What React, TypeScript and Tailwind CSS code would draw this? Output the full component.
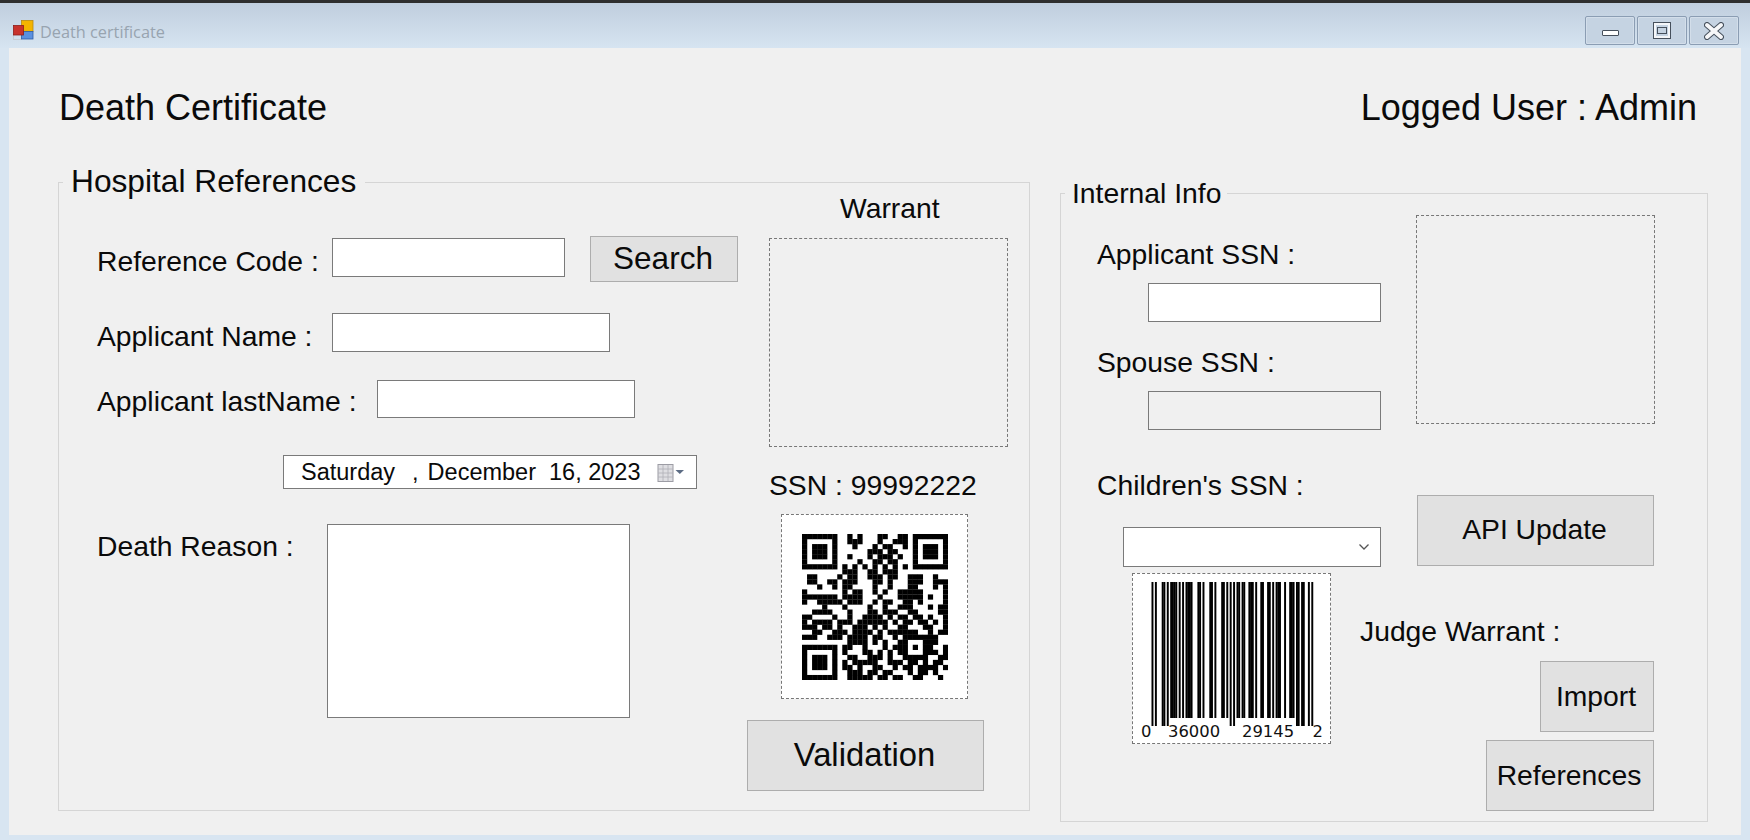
import React from "react";

const FONT = "font-['Liberation_Sans',Arial,sans-serif]";

const top = (s: string) => "00000000" + s.replace(/ /g, "") + "00000000";
const mid = (a: string, b: string, c: string) => a + b + c;
const bot = (s: string) => "00000000" + s;

const qrData = [
  top("0101000110011"),
  top("0111000100111"),
  top("0010001011001"),
  top("0000011101100"),
  top("0100010111010"),
  top("0001001101100"),
  top("1010101010101"),
  top("1110011011100"),
  mid("01100001", "01100111011001", "1100100"),
  mid("01100110", "11100011010001", "1100111"),
  mid("00010010", "11000010010001", "1000101"),
  mid("10000000", "10110010100111", "1100001"),
  mid("11111110", "11110001000111", "1101001"),
  mid("10011111", "01110010110011", "0100001"),
  mid("00001000", "10000100100111", "0001011"),
  mid("00111100", "01000110111001", "1000011"),
  mid("11000010", "01001111010110", "1101001"),
  mid("10111101", "11011111101011", "0110101"),
  mid("11101101", "00111010100110", "0011001"),
  mid("00110011", "10111101011111", "1001011"),
  mid("11100111", "01111011001000", "0001100"),
  bot("011110101001100011100"),
  bot("110010001011101011001"),
  bot("100011010101100011101"),
  bot("011001110100111110011"),
  bot("101111100111011010110"),
  bot("110100110010110111101"),
  bot("011101101100010110100"),
  bot("011111011011001100010"),
];

function finder(r: number, c: number) {
  const ring = (x: number, y: number) => {
    const dx = c - x;
    const dy = r - y;
    if (dx < 0 || dy < 0 || dx > 6 || dy > 6) return -1;
    if (dx === 0 || dy === 0 || dx === 6 || dy === 6) return 1;
    if (dx === 1 || dy === 1 || dx === 5 || dy === 5) return 0;
    return 1;
  };
  return Math.max(ring(0, 0), ring(22, 0), ring(0, 22));
}

function qrCell(r: number, c: number) {
  const f = finder(r, c);
  if (f >= 0) return f === 1;
  if (r >= 20 && r <= 24 && c >= 20 && c <= 24) {
    if (r === 20 || r === 24 || c === 20 || c === 24) return true;
    return r === 22 && c === 22;
  }
  return qrData[r][c] === "1";
}

const L: Record<string, string> = {
  "0": "0001101", "1": "0011001", "2": "0010011", "3": "0111101", "4": "0100011",
  "5": "0110001", "6": "0101111", "7": "0111011", "8": "0110111", "9": "0001011",
};
const R = (d: string) => L[d].split("").map((c) => (c === "1" ? "0" : "1")).join("");
const upc = "101" + "036000".split("").map((d) => L[d]).join("") + "01010" + "291452".split("").map(R).join("") + "101";
const isLong = (i: number) => i < 10 || (i >= 45 && i < 50) || i >= 85;

function Barcode() {
  const m = 161.5 / 95;
  return (
    <svg width="197" height="169" viewBox="0 0 197 169" className="block">
      {upc.split("").map((b, i) =>
        b === "1" ? <rect key={i} x={18.5 + i * m} y={8} width={m + 0.25} height={isLong(i) ? 144 : 136} fill="#000" /> : null
      )}
      <g fontFamily="'DejaVu Sans',sans-serif" fontSize="16.4" fill="#111">
        <text x="8" y="162.5">0</text>
        <text x="35" y="162.5">36000</text>
        <text x="109" y="162.5">29145</text>
        <text x="179.5" y="162.5">2</text>
      </g>
    </svg>
  );
}

function Qr() {
  const s = 146 / 29;
  const cells: React.ReactNode[] = [];
  for (let r = 0; r < 29; r++) {
    for (let c = 0; c < 29; c++) {
      if (qrCell(r, c)) {
        cells.push(<rect key={r + "-" + c} x={c * s} y={r * s} width={s + 0.2} height={s + 0.2} fill="#000" />);
      }
    }
  }
  return (
    <svg width="146" height="146" viewBox="0 0 146 146" className="block">
      {cells}
    </svg>
  );
}

function Label({ children, className = "" }: { children: React.ReactNode; className?: string }) {
  return <div className={"text-[28.3px] leading-[36px] whitespace-pre text-[#0a0a0a] " + className}>{children}</div>;
}

function Field({ className = "" }: { className?: string }) {
  return <div className={"border border-[#7a7a7a] bg-white " + className} />;
}

function Btn({ children, className = "" }: { children: React.ReactNode; className?: string }) {
  return (
    <div className={"flex items-center justify-center border border-[#adadad] bg-[#e1e1e1] text-[#0a0a0a] " + className}>
      {children}
    </div>
  );
}

function WinBtn({ children }: { children: React.ReactNode }) {
  return (
    <div className="flex h-[29px] w-[50px] items-center justify-center rounded-[2px] border border-[#8b9db3] bg-[#c5d3e2] shadow-[inset_0_0_0_1px_#d3deea]">
      {children}
    </div>
  );
}

export default function App() {
  return (
    <div className={"flex h-[840px] w-[1750px] flex-col overflow-hidden bg-[#d8e5f1] " + FONT}>
      <div className="h-[3px] bg-[#2e2e2e]" />
      <div className="flex h-[45px] items-start bg-gradient-to-b from-[#c0cede] to-[#d6e4f1]">
        <svg width="22" height="22" viewBox="0 0 22 22" className="ml-[12px] mt-[16px]">
          <rect x="1.5" y="15" width="8" height="5.5" fill="none" stroke="#c4c4c8" strokeWidth="0.7" />
          <rect x="9.5" y="1.5" width="11.5" height="11" fill="#f4b400" stroke="#b98a10" strokeWidth="0.8" />
          <rect x="9.5" y="12.5" width="11.5" height="7.5" fill="#5a90e0" stroke="#2f5ea8" strokeWidth="0.8" />
          <rect x="1.5" y="6.5" width="10" height="9.5" fill="#c8322c" stroke="#8e1d1a" strokeWidth="0.8" />
        </svg>
        <div className="ml-[6px] mt-[16px] font-['Open_Sans',sans-serif] text-[16.3px] leading-[26px] text-[#98a4b0]">Death certificate</div>
        <div className="ml-auto mr-[11px] mt-[13px] flex gap-[2px]">
          <WinBtn>
            <div className="mt-[4px] h-[6px] w-[17px] rounded-[1px] border border-[#46505c] bg-white" />
          </WinBtn>
          <WinBtn>
            <div className="flex h-[15px] w-[16px] items-center justify-center border-[2px] border-[#f4f6f9] outline outline-1 outline-[#46505c]">
              <div className="h-[7px] w-[10px] border border-[#46505c] bg-[#c5d3e2]" />
            </div>
          </WinBtn>
          <WinBtn>
            <svg width="20" height="18" viewBox="0 0 20 18">
              <path d="M3 3 L17 15 M17 3 L3 15" stroke="#46505c" strokeWidth="6" strokeLinecap="round" />
              <path d="M3 3 L17 15 M17 3 L3 15" stroke="#f6f7f9" strokeWidth="4" strokeLinecap="round" />
            </svg>
          </WinBtn>
        </div>
      </div>

      <div className="mx-[9px] h-[787px] bg-[#f0f0f0]">
        <div className="flex justify-between pl-[50px] pr-[44px] pt-[40px] text-[36px] leading-[40px] text-[#0a0a0a]">
          <div>Death Certificate</div>
          <div>Logged User : Admin</div>
        </div>

        <div className="mt-[54px] flex items-start">
          {/* Hospital References */}
          <div className="relative ml-[49px] flex w-[972px] border border-[#d5d5d5] pb-[19px] pl-[38px]">
            <div className="absolute left-[4px] top-[-20px] bg-[#f0f0f0] pl-[8px] pr-[9px] text-[31.7px] leading-[36px] text-[#0a0a0a]">Hospital References</div>

            <div className="w-[650px] pt-[53px]">
              <div className="flex items-start">
                <Label className="mt-[7px] w-[235px]">Reference Code :</Label>
                <Field className="mt-[2px] h-[39px] w-[233px]" />
                <Btn className="ml-[25px] h-[46px] w-[148px] pr-[2px] text-[31.5px]">Search</Btn>
              </div>
              <div className="mt-[31px] flex items-start">
                <Label className="mt-[5px] w-[235px]">Applicant Name :</Label>
                <Field className="h-[39px] w-[278px]" />
              </div>
              <div className="mt-[26px] flex items-start">
                <Label className="mt-[3px] w-[280px]">Applicant lastName :</Label>
                <Field className="h-[38px] w-[258px]" />
              </div>
              <div className="ml-[186px] mt-[36px] flex h-[34px] w-[414px] items-center border border-[#7a7a7a] bg-white pl-[17px] pt-[1px] text-[23.5px] text-[#0a0a0a]">
                <span className="whitespace-pre">Saturday</span>
                <span className="ml-[17px] whitespace-pre">,</span>
                <span className="ml-[9px] whitespace-pre">December</span>
                <span className="ml-[13px] whitespace-pre">16, 2023</span>
                <svg width="30" height="20" viewBox="0 0 30 20" className="ml-[17px]">
                  <rect x="1" y="1.5" width="15" height="17" fill="#dedee2" stroke="#9c9ca4" />
                  <path d="M1 6H16M1 10H16M1 14H16M6 2V18M11 2V18" stroke="#b0b0b8" strokeWidth="0.8" />
                  <path d="M18.5 7H27L22.8 11Z" fill="#5c6c84" />
                </svg>
              </div>
              <div className="mt-[35px] flex items-start">
                <Label className="mt-[4px] w-[230px]">Death Reason :</Label>
                <Field className="h-[194px] w-[303px]" />
              </div>
            </div>

            <div className="w-[261px] pt-[7px]">
              <Label className="ml-[93px]">Warrant</Label>
              <div className="ml-[22px] mt-[12px] h-[209px] w-[239px] border border-dashed border-[#777777]" />
              <Label className="ml-[22px] mt-[20px]">SSN : 99992222</Label>
              <div className="ml-[34px] mt-[11px] flex h-[185px] w-[187px] items-center justify-center border border-dashed border-[#777777] bg-white">
                <Qr />
              </div>
              <Btn className="mt-[21px] h-[71px] w-[237px] pb-[2px] pr-[2px] text-[32.8px]">Validation</Btn>
            </div>
          </div>

          {/* Internal Info */}
          <div className="relative ml-[30px] mt-[11px] w-[648px] border border-[#d5d5d5] pb-[10px] pl-[36px]">
            <div className="absolute left-[4px] top-[-19px] bg-[#f0f0f0] pl-[7px] pr-[6px] text-[28.3px] leading-[36px] text-[#0a0a0a]">Internal Info</div>

            <div className="flex items-start">
              <div className="w-[319px] pt-[42px]">
                <Label>Applicant SSN :</Label>
                <Field className="ml-[51px] mt-[11px] h-[39px] w-[233px]" />
                <Label className="mt-[22px]">Spouse SSN :</Label>
                <div className="ml-[51px] mt-[11px] h-[39px] w-[233px] border border-[#7a7a7a] bg-[#f0f0f0]" />
              </div>
              <div className="mt-[21px] h-[209px] w-[239px] border border-dashed border-[#777777]" />
            </div>

            <div className="mt-[37px] flex items-start">
              <div className="w-[320px]">
                <Label>Children's SSN :</Label>
                <div className="ml-[26px] mt-[24px] flex h-[40px] w-[258px] items-center justify-end border border-[#7a7a7a] bg-white pr-[10px]">
                  <svg width="12" height="8" viewBox="0 0 12 8">
                    <path d="M1.5 1.5L6 6L10.5 1.5" fill="none" stroke="#555" strokeWidth="1.3" />
                  </svg>
                </div>
              </div>
              <Btn className="mt-[28px] h-[71px] w-[237px] pb-[2px] pr-[2px] text-[28.3px]">API Update</Btn>
            </div>

            <div className="flex items-start">
              <div className="ml-[35px] mt-[6px] h-[171px] w-[199px] border border-dashed border-[#777777] bg-white">
                <Barcode />
              </div>
              <div className="ml-[29px] mt-[46px]">
                <Label>Judge Warrant :</Label>
                <Btn className="ml-[180px] mt-[12px] h-[71px] w-[114px] pr-[2px] text-[28.3px]">Import</Btn>
                <Btn className="ml-[126px] mt-[8px] h-[71px] w-[168px] pr-[2px] text-[28.3px]">References</Btn>
              </div>
            </div>
          </div>
        </div>
      </div>
    </div>
  );
}
